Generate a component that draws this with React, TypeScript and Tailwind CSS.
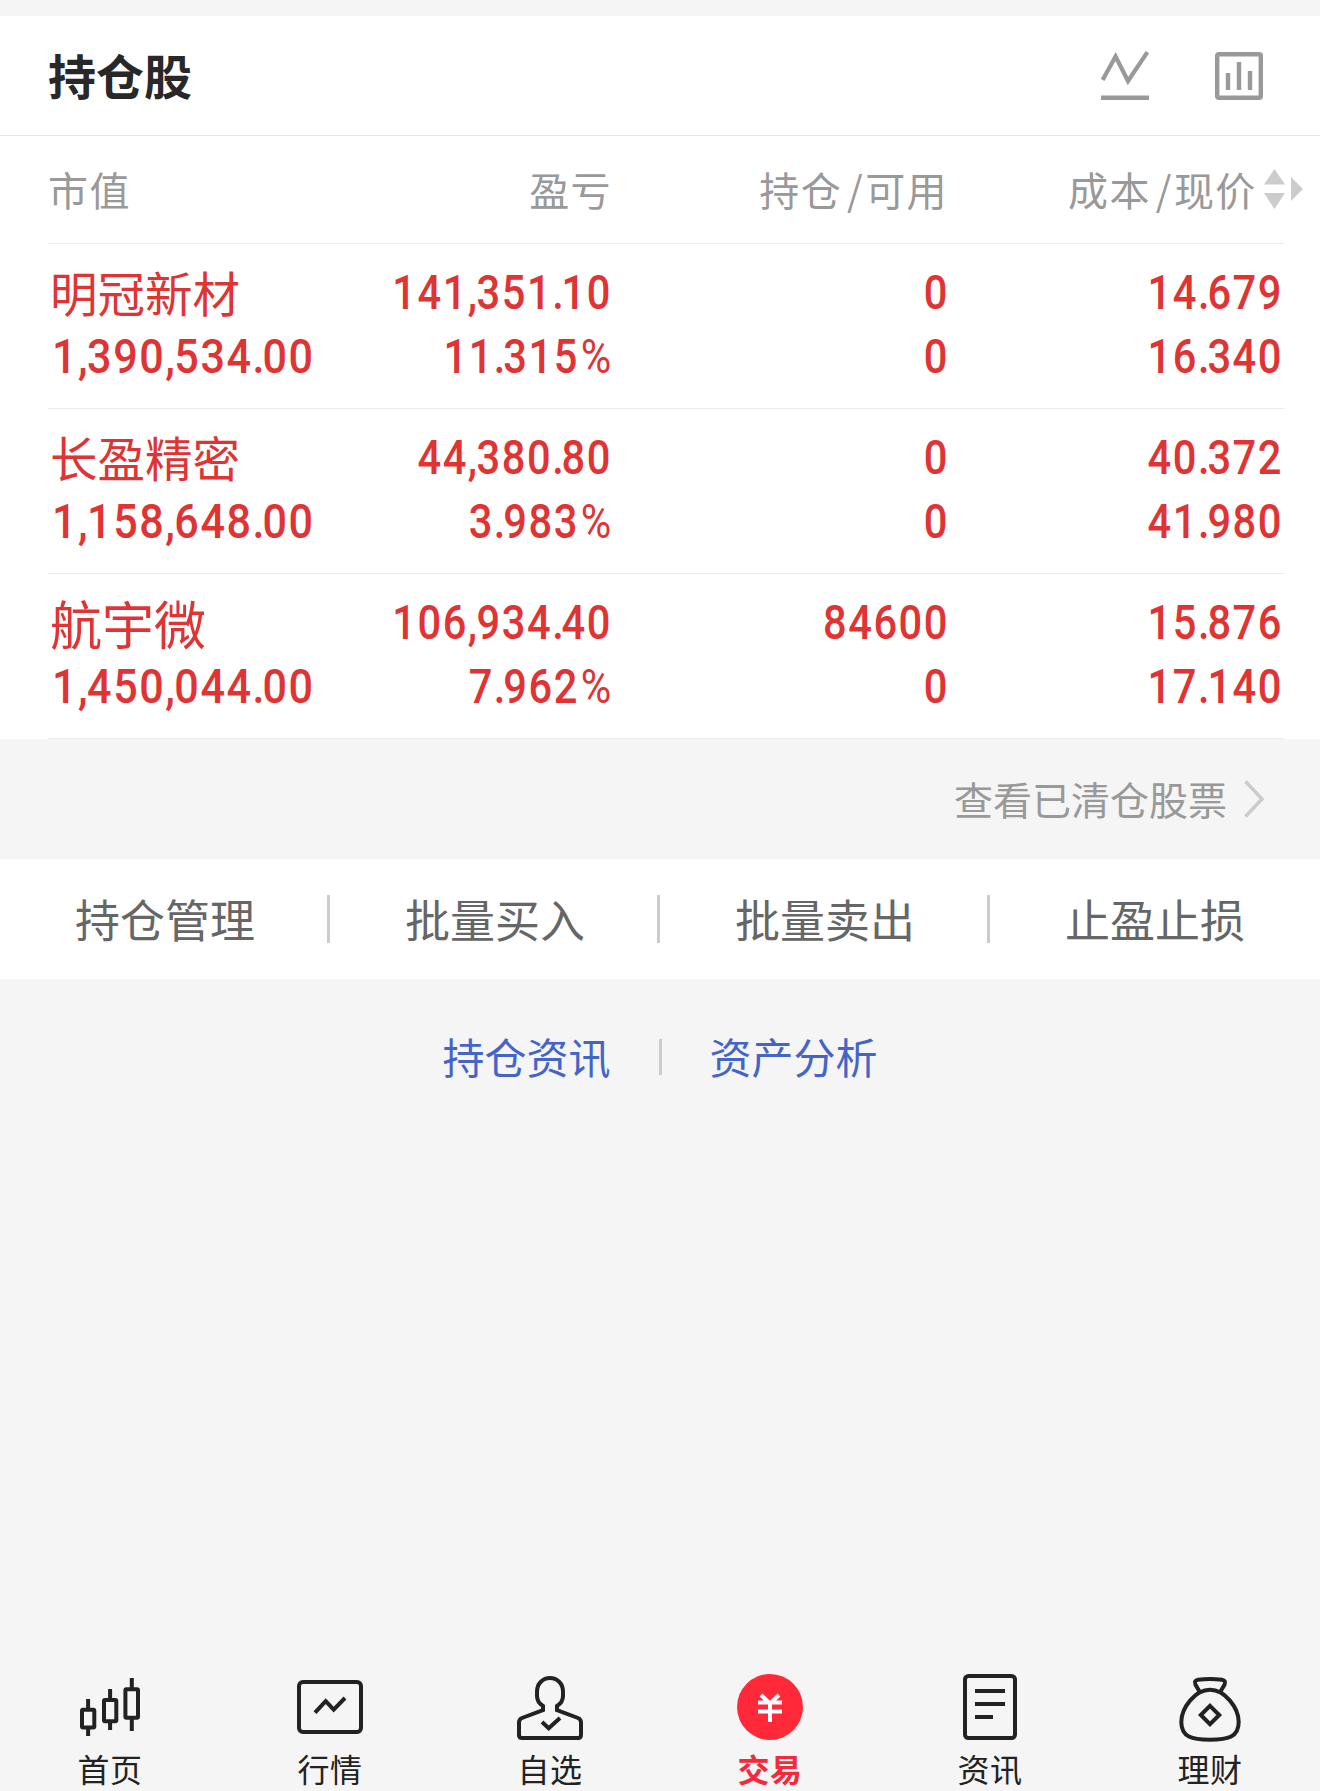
import type { ReactNode } from "react";

interface Holding {
  name: string;
  nameClass?: string;
  marketValue: string;
  profit: string;
  profitRate: string;
  position: string;
  available: string;
  cost: string;
  price: string;
}

const holdings: Holding[] = [
  {
    name: "明冠新材",
    marketValue: "1,390,534.00",
    profit: "141,351.10",
    profitRate: "11.315",
    position: "0",
    available: "0",
    cost: "14.679",
    price: "16.340",
  },
  {
    name: "长盈精密",
    marketValue: "1,158,648.00",
    profit: "44,380.80",
    profitRate: "3.983",
    position: "0",
    available: "0",
    cost: "40.372",
    price: "41.980",
  },
  {
    name: "航宇微",
    nameClass: "text-[52px] leading-[65px]",
    marketValue: "1,450,044.00",
    profit: "106,934.40",
    profitRate: "7.962",
    position: "84600",
    available: "0",
    cost: "15.876",
    price: "17.140",
  },
];

const actions = ["持仓管理", "批量买入", "批量卖出", "止盈止损"];

const gridCols = "grid grid-cols-[300px_262px_334px_336px]";

interface NumProps {
  children: string;
  percent?: boolean;
  left?: boolean;
}

function Num({ children, percent, left }: NumProps) {
  return (
    <div
      className={`h-16 leading-[66px] text-[49px] font-medium font-[Roboto,sans-serif] tracking-[1.8px] whitespace-nowrap ${
        left ? "origin-left scale-x-[0.88]" : "origin-right scale-x-[0.85]"
      }`}
    >
      {children.split("").map((c, i) => (
        <span key={i} className={c === "," ? "tracking-[-0.8px]" : c === "." ? "tracking-[-2.5px]" : ""}>{c}</span>
      ))}
      {percent && <span className="ml-0.5 font-normal tracking-[1px]">%</span>}
    </div>
  );
}

function TrendIcon() {
  return (
    <svg width="48" height="50" viewBox="0 0 48 50" fill="none" stroke="#999" strokeWidth="4.2">
      <path d="M1.6 29 14.6 5.5 27 30 46.4 1.2" />
      <path d="M0 46.7H48" strokeWidth="4.6" />
    </svg>
  );
}

function BarsIcon() {
  return (
    <svg width="48" height="48" viewBox="0 0 48 48" fill="none" stroke="#999" strokeWidth="4.4">
      <rect x="2.2" y="2.2" width="43.6" height="43.6" rx="1.5" />
      <path d="M13 21V38M24 10V38M35 19V38" />
    </svg>
  );
}

function Icon({ children }: { children: ReactNode }) {
  return (
    <svg width="80" height="80" viewBox="0 0 80 80" fill="none" stroke="#222" strokeWidth="4">
      {children}
    </svg>
  );
}

const tabs = [
  {
    label: "首页",
    icon: (
      <Icon>
        <rect x="12" y="39.7" width="12.3" height="17.7" rx="1" />
        <rect x="34" y="30" width="12.3" height="21.3" rx="1" />
        <rect x="55.4" y="19.3" width="12.6" height="28.4" rx="1" />
        <path d="M18.1 29V38M18.1 59V66M40.1 19V29M40.1 53V60M61.8 8V18M61.8 49V61" />
      </Icon>
    ),
  },
  {
    label: "行情",
    icon: (
      <Icon>
        <rect x="9" y="12" width="62" height="50" rx="4" />
        <path d="M25 42.7 35.7 31.2 43.7 39.6 55 28" />
      </Icon>
    ),
  },
  {
    label: "自选",
    icon: (
      <Icon>
        <path d="M33 36C29 33.5 27 29 27 26V21.5C27 13.5 33 8 40 8S53 13.5 53 21.5V26C53 29 51 33.5 47 36V40L68 48Q71 49.3 71 52.5V65Q71 68 68 68H12Q9 68 9 65V52.5Q9 49.3 12 48L33 40Z" />
        <path d="M32 52 38.7 58.3 50 48" />
      </Icon>
    ),
  },
  {
    label: "交易",
    active: true,
    icon: (
      <Icon>
        <circle cx="40" cy="37" r="33" fill="#ff2939" stroke="none" />
        <path d="M31 25 40 33.5 49 25M28 32.6H52M28 41.6H52M40 33V52" stroke="#fff" />
      </Icon>
    ),
  },
  {
    label: "资讯",
    icon: (
      <Icon>
        <rect x="15" y="6" width="50" height="62" rx="3.5" />
        <path d="M25 21H55M25 34H55M25 47H43" />
      </Icon>
    ),
  },
  {
    label: "理财",
    icon: (
      <Icon>
        <path d="M40 19.7C55 19.7 68.7 38 68.7 52C68.7 67 58 69.7 40 69.7C22 69.7 11.3 67 11.3 52C11.3 38 25 19.7 40 19.7Z" />
        <path d="M29.8 22 25.4 14.5Q23.8 10.4 28 9.7Q40 8.2 52 9.7Q56.2 10.4 54.6 14.5L50.2 22" />
        <path d="M40 35.8 49.2 45 40 54.2 30.8 45Z" />
      </Icon>
    ),
  },
];

export default function App() {
  return (
    <div className="flex flex-col w-[1320px] h-[1791px] overflow-hidden bg-[#f5f5f5] pt-4 font-['Noto_Sans_CJK_SC',sans-serif]">
      <section className="bg-white">
        <header className="flex items-center justify-between h-[120px] pl-12 pr-[57px] border-b border-[#e6e6e6]">
          <h1 className="pb-1 text-[48px] leading-[60px] font-bold text-[#282828]">持仓股</h1>
          <div className="flex items-center gap-[66px]">
            <TrendIcon />
            <BarsIcon />
          </div>
        </header>

        <div className="pl-12 pr-9">
          <div className={`${gridCols} h-[108px] pb-0.5 items-center border-b border-[#ebebeb] text-[40px] tracking-[1.4px] text-[#999] whitespace-nowrap`}>
            <div>市值</div>
            <div className="text-right -mr-0.5">盈亏</div>
            <div className="text-right -mr-1">
              持仓<span className="ml-[5px] mr-px">/</span>可用
            </div>
            <div className="flex items-center pl-[124px]">
              成本<span className="ml-[5px] mr-px">/</span>现价
              <svg className="ml-[7px] shrink-0" width="40" height="40" viewBox="0 0 40 40" fill="#ccc">
                <path d="M0 15.5 10.5 0 21 15.5ZM0 24H21L10.5 40ZM27 8 39 20 27 32Z" />
              </svg>
            </div>
          </div>

          {holdings.map((h) => (
            <div key={h.name} className={`${gridCols} h-[165px] pt-4 border-b border-[#ebebeb] text-right text-[#e03434]`}>
              <div className="text-left">
                <div className={`h-16 pl-0.5 ${h.nameClass ?? "text-[47.5px] leading-[63px]"}`}>{h.name}</div>
                <div className="pl-1">
                  <Num left>{h.marketValue}</Num>
                </div>
              </div>
              <div className="-mr-0.5">
                <Num>{h.profit}</Num>
                <Num percent>{h.profitRate}</Num>
              </div>
              <div className="-mr-[5px]">
                <Num>{h.position}</Num>
                <Num>{h.available}</Num>
              </div>
              <div className="-mr-[3px]">
                <Num>{h.cost}</Num>
                <Num>{h.price}</Num>
              </div>
            </div>
          ))}
        </div>
      </section>

      <div className="flex items-center justify-end h-[120px] pr-14 text-[39px] text-[#999]">
        <span className="pb-0.5 mr-[17px]">查看已清仓股票</span>
        <svg width="20" height="38" viewBox="0 0 20 38" fill="none" stroke="#ccc" strokeWidth="3.5">
          <path d="M1.5 1.5 18 19 1.5 36.5" />
        </svg>
      </div>

      <nav className="grid grid-cols-4 h-[120px] items-center bg-white text-[45px] leading-[48px] text-[#666]">
        {actions.map((a, i) => (
          <div key={a} className={`h-12 text-center ${i < actions.length - 1 ? "pl-[3px] border-r-[3px] border-[#ccc]" : ""}`}>
            {a}
          </div>
        ))}
      </nav>

      <div className="flex items-center justify-center h-[156px] gap-12 text-[42px] text-[#4464c8]">
        <span className="pb-[3px]">持仓资讯</span>
        <span className="w-[3px] h-9 bg-[#ccc]" />
        <span className="pb-[3px]">资产分析</span>
      </div>

      <footer className="grid grid-cols-6 mt-auto h-[121px]">
        {tabs.map((t) => (
          <div key={t.label} className="flex flex-col items-center">
            {t.icon}
            <span className={`text-[32px] leading-[36px] tracking-[0.5px] ${t.active ? "font-bold text-[#f5293a]" : "text-[#222]"}`}>
              {t.label}
            </span>
          </div>
        ))}
      </footer>
    </div>
  );
}
